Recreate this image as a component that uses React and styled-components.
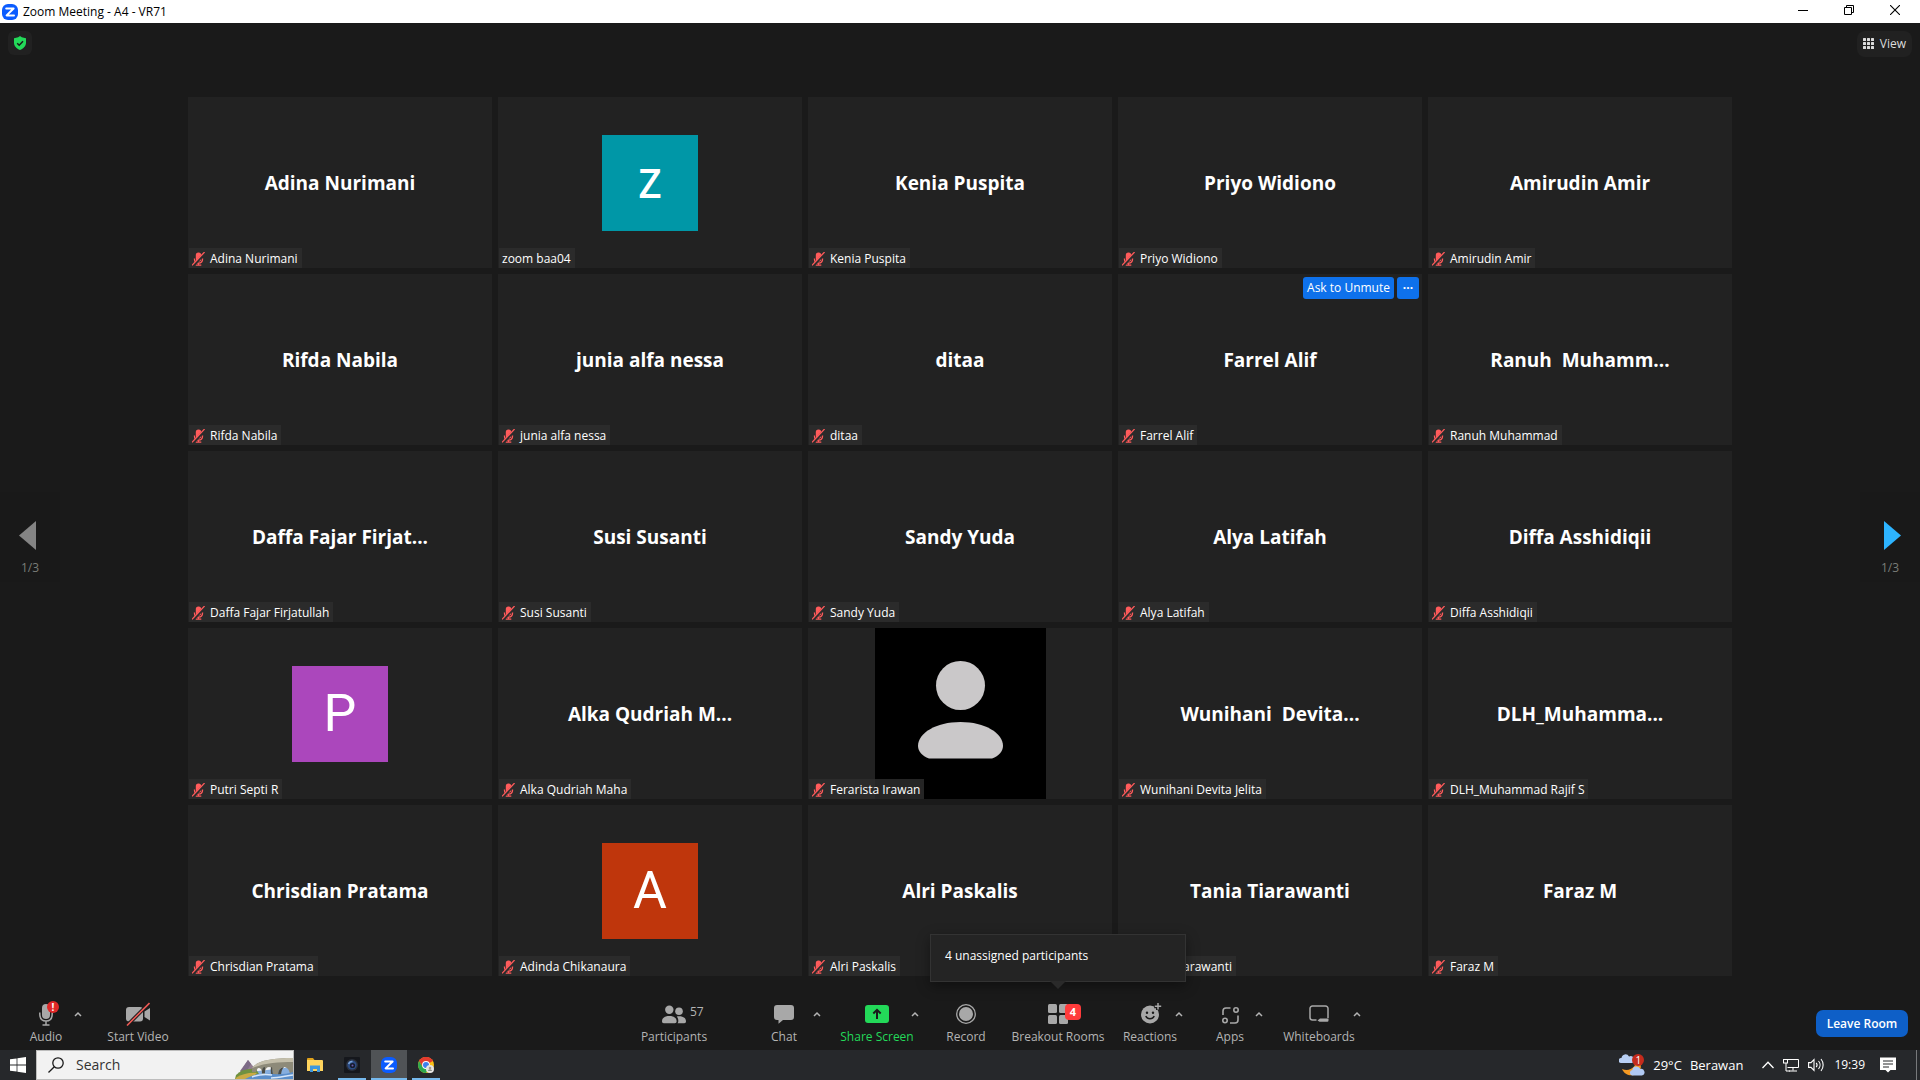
import styled, { createGlobalStyle } from 'styled-components';

const GlobalStyle = createGlobalStyle`
    *, *::before, *::after {
        box-sizing: border-box;
    }

    body {
        margin: 0;
        background: #1a1a1a;
        color: #fff;
        font-family: "Open Sans", "Noto Sans", sans-serif;
        font-size: 12px;
        line-height: 16px;
    }

    button, input {
        margin: 0;
        padding: 0;
        border: 0;
        background: none;
        color: inherit;
        font: inherit;
    }

    button {
        cursor: pointer;
    }

    svg {
        display: block;
        flex: none;
    }
`;

const participants = [
    { name: 'Adina Nurimani' },
    { name: 'zoom baa04', unmuted: true, avatar: { letter: 'Z', color: '#0097a7', size: 40, weight: 600 } },
    { name: 'Kenia Puspita' },
    { name: 'Priyo Widiono' },
    { name: 'Amirudin Amir' },
    { name: 'Rifda Nabila' },
    { name: 'junia alfa nessa' },
    { name: 'ditaa' },
    { name: 'Farrel Alif', hovered: true },
    { name: 'Ranuh Muhammad', title: 'Ranuh  Muhamm...' },
    { name: 'Daffa Fajar Firjatullah', title: 'Daffa Fajar Firjat...' },
    { name: 'Susi Susanti' },
    { name: 'Sandy Yuda' },
    { name: 'Alya Latifah' },
    { name: 'Diffa Asshidiqii' },
    { name: 'Putri Septi R', avatar: { letter: 'P', color: '#ab47bc', size: 52, weight: 400 } },
    { name: 'Alka Qudriah Maha', title: 'Alka Qudriah M...' },
    { name: 'Ferarista Irawan', silhouette: true },
    { name: 'Wunihani Devita Jelita', title: 'Wunihani  Devita...' },
    { name: 'DLH_Muhammad Rajif S', title: 'DLH_Muhamma...' },
    { name: 'Chrisdian Pratama' },
    { name: 'Adinda Chikanaura', avatar: { letter: 'A', color: '#bf360c', size: 52, weight: 400 } },
    { name: 'Alri Paskalis' },
    { name: 'Tania Tiarawanti' },
    { name: 'Faraz M' },
];

/* ---------- icons ---------- */

const ZoomLogo = ({ size }) => (
    <svg width={size} height={size} viewBox="0 0 16 16">
        <rect width="16" height="16" rx="6" fill="#0b5cff" />
        <path d="M4.2 4.5h7.4L4.6 11.4h7.4" fill="none" stroke="#fff" strokeWidth="2" strokeLinejoin="round" strokeLinecap="round" />
    </svg>
);

const MutedMic = () => (
    <svg width="13" height="14" viewBox="0 0 13 14">
        <rect x="3.8" y="0.5" width="5.4" height="9" rx="2.6" fill="#ff5b5b" />
        <path d="M2.4 6.5c0 3 1.600 4.600 4.100 4.600s4.100-1.600 4.100-4.600M6.500 11v2M3.700 13.200h5.600" fill="none" stroke="#ff5b5b" strokeWidth="1.3" />
        <path d="M0.800 14L13 1" stroke="#2b2b2b" strokeWidth="2.600" />
        <path d="M0 13.400L12.600 0" stroke="#ff5b5b" strokeWidth="1.300" />
    </svg>
);

const Silhouette = () => (
    <svg width="100%" height="100%" viewBox="0 0 171 171">
        <circle cx="85.5" cy="57.5" r="24.5" fill="#cac8c9" />
        <path d="M54 130.5C47 128 43 123 43 118C43 105 61 94 85.500 94S128 105 128 118C128 123 124 128 117 130.500Z" fill="#cac8c9" />
    </svg>
);

const AudioIcon = () => (
    <svg width="24" height="24" viewBox="0 0 24 24">
        <rect x="8" y="2" width="8" height="15" rx="4" fill="#a8a8a8" />
        <path d="M5.800 10.500v1.500c0 4.600 2.600 7 6.200 7s6.200-2.400 6.200-7v-1.500M12 19v3.500M8.500 23h7" fill="none" stroke="#a8a8a8" strokeWidth="1.500" />
    </svg>
);

const VideoOffIcon = () => (
    <svg width="24" height="24" viewBox="0 0 24 24">
        <rect x="0" y="5" width="17" height="14.500" rx="3" fill="#a8a8a8" />
        <path d="M18.500 9.500L24 6v12.500l-5.500-3.500z" fill="#a8a8a8" />
        <path d="M1 23.500L23.500 1" stroke="#1a1a1a" strokeWidth="3.600" />
        <path d="M1 23.500L23.500 1" stroke="#ee5a55" strokeWidth="1.600" />
    </svg>
);

const ParticipantsIcon = () => (
    <svg width="24" height="24" viewBox="0 0 24 24" fill="#a8a8a8">
        <circle cx="7.300" cy="7.700" r="4.200" />
        <circle cx="17" cy="9.300" r="3.800" />
        <path d="M0 19.200C0 15.500 3.500 14 7.300 14s7.300 1.500 7.300 5.200c0 1.300-.6 2-1.800 2H1.800c-1.200 0-1.800-.7-1.800-2z" />
        <path d="M14.800 14.600c4.200-.8 9.200.4 9.200 4.600 0 1.300-.6 2-1.700 2h-6.700c.5-.6.700-1.300.7-2.200 0-1.900-.5-3.300-1.500-4.400z" />
    </svg>
);

const ChatIcon = () => (
    <svg width="24" height="24" viewBox="0 0 24 24" fill="#a8a8a8">
        <path d="M5 3h14a3 3 0 0 1 3 3v9a3 3 0 0 1-3 3h-8l-4.500 3.800V18H5a3 3 0 0 1-3-3V6a3 3 0 0 1 3-3z" />
    </svg>
);

const ShareIcon = () => (
    <svg width="24" height="24" viewBox="0 0 24 24">
        <rect y="3" width="24" height="18" rx="3" fill="#23d959" />
        <path d="M12 17V8.500M8.300 11.500L12 7.800l3.700 3.700" fill="none" stroke="#1a1a1a" strokeWidth="2" />
    </svg>
);

const RecordIcon = () => (
    <svg width="24" height="24" viewBox="0 0 24 24">
        <circle cx="12" cy="12" r="9.300" fill="none" stroke="#a8a8a8" strokeWidth="1.300" />
        <circle cx="12" cy="12" r="7" fill="#a8a8a8" />
    </svg>
);

const RoomsIcon = () => (
    <svg width="24" height="24" viewBox="0 0 24 24" fill="#a8a8a8">
        <rect x="2" y="2" width="9" height="9" rx="1.500" />
        <rect x="13" y="2" width="9" height="9" rx="1.500" />
        <rect x="2" y="13" width="9" height="9" rx="1.500" />
        <rect x="13" y="13" width="9" height="9" rx="1.500" />
    </svg>
);

const ReactionsIcon = () => (
    <svg width="24" height="24" viewBox="0 0 24 24">
        <circle cx="12" cy="12.500" r="9" fill="#a8a8a8" />
        <circle cx="9" cy="10.800" r="1.200" fill="#1a1a1a" />
        <circle cx="15" cy="10.800" r="1.200" fill="#1a1a1a" />
        <path d="M7.800 14c.8 1.800 2.300 2.800 4.200 2.800s3.400-1 4.200-2.800" fill="none" stroke="#1a1a1a" strokeWidth="1.500" />
        <path d="M20 0.500v7.500M16.200 4.200H24" stroke="#1a1a1a" strokeWidth="4" />
        <path d="M20 1v6.400M16.800 4.200h6.400" stroke="#a8a8a8" strokeWidth="1.500" />
    </svg>
);

const AppsIcon = () => (
    <svg width="24" height="24" viewBox="0 0 24 24" fill="none" stroke="#a8a8a8" strokeWidth="1.600">
        <path d="M5 13V9a3 3 0 0 1 3-3h4.500M12 21h5a3 3 0 0 0 3-3v-4.500" />
        <circle cx="18" cy="8" r="2.200" />
        <circle cx="7" cy="18.500" r="2.200" />
    </svg>
);

const WhiteboardIcon = () => (
    <svg width="24" height="24" viewBox="0 0 24 24">
        <path d="M9.500 18H5.500a2.500 2.500 0 0 1-2.500-2.500v-9A2.500 2.500 0 0 1 5.500 4h13A2.500 2.500 0 0 1 21 6.500V16" fill="none" stroke="#a8a8a8" strokeWidth="1.500" />
        <path d="M10.500 18.500l2.500-2h8.500v2a1.200 1.200 0 0 1-1.200 1.200h-7.800z" fill="#a8a8a8" />
    </svg>
);

const CaretIcon = () => (
    <svg width="8" height="6" viewBox="0 0 8 6">
        <path d="M1 5l3-3 3 3" fill="none" stroke="#b4b4b4" strokeWidth="1.500" />
    </svg>
);

const ShieldIcon = () => (
    <svg width="14" height="14" viewBox="0 0 14 14">
        <path d="M7 0l1.800 1.200 4.200 1v4.600c0 3.400-2.600 5.800-6 7.200-3.400-1.400-6-3.800-6-7.200V2.200l4.200-1z" fill="#23d959" />
        <path d="M4.200 7.200l2 2 3.800-4" fill="none" stroke="#1a1a1a" strokeWidth="1.500" />
    </svg>
);

const GridIcon = () => (
    <svg width="11" height="11" viewBox="0 0 11 11" fill="#dcdcdc">
        {[0, 4, 8].map(y => [0, 4, 8].map(x => (
            <rect key={`${x}-${y}`} x={x} y={y} width="3" height="3" rx="0.500" />
        )))}
    </svg>
);

const WindowsIcon = () => (
    <svg width="16" height="16" viewBox="0 0 16 16" fill="#fff">
        <path d="M0 2.300l6.600-.9v6.200H0zM7.400 1.300L16 0v7.600H7.400zM0 8.400h6.600v6.200L0 13.700zM7.400 8.400H16V16l-8.600-1.200z" />
    </svg>
);

const MagnifierIcon = () => (
    <svg width="16" height="16" viewBox="0 0 16 16" fill="none" stroke="#1a1a1a" strokeWidth="1.300">
        <circle cx="10" cy="6" r="5.200" />
        <path d="M6.300 9.700L0.500 15.500" />
    </svg>
);

const BridgeArt = () => (
    <svg width="58" height="28" viewBox="0 0 58 28">
        <path d="M5 20L13 9l8 10z" fill="#927c90" />
        <path d="M13 9l3 4-5 8H5z" fill="#7c6a86" />
        <path d="M14 21L58 16v12H0z" fill="#86aede" />
        <path d="M1 24c5-5 12-7 20-6l3 5-22 5H0z" fill="#6f9140" />
        <path d="M2 26c6-3 13-5 20-4l-6 6H0z" fill="#c9ab45" />
        <path d="M17 17c4-5 10-7 16-8 8-1.500 16-2 25-2v21h-3c1-7-2-12-6-12s-6 4-6 9h-5c0-6-1-9-4-9s-4 3-4 7h-3c0-4-1-6-3-6s-2 2-3 4h-4z" fill="#8d8a79" />
        <path d="M17 17c4-5 10-7 16-8 8-1.500 16-2 25-2v4c-14 0-28 1-38 5z" fill="#c3beaa" />
        <path d="M27 22c0-3 .5-6 3-6v6zM36 24c0-4-1-8 1-8l1 8zM43 25c0-6 3-9 6-9-2 2-3 5-3 9z" fill="#4b4d48" />
        <path d="M10 28c8-5 18-6 28-5 8 .5 14 0 20-2v7z" fill="#5a8ecb" />
        <path d="M17 26c8-3 14-3 20-2M36 27c8 0 14-2 22-3" fill="none" stroke="#d5e6fa" strokeWidth="1.500" />
    </svg>
);

const FolderIcon = () => (
    <svg width="16" height="16" viewBox="0 0 16 16">
        <path d="M0 2a1 1 0 0 1 1-1h5l1.500 2H0z" fill="#e0a21b" />
        <path d="M0 3h15a1 1 0 0 1 1 1v10H0z" fill="#ffd45e" />
        <path d="M3 15V8.500h10V15h-3v-3H6v3z" fill="#3f97dd" />
    </svg>
);

const CameraIcon = () => (
    <svg width="16" height="16" viewBox="0 0 16 16">
        <rect width="16" height="16" rx="1" fill="#15171c" />
        <circle cx="8" cy="8" r="6" fill="#2b313d" />
        <circle cx="8" cy="8" r="4.600" fill="#2c4d86" />
        <circle cx="8.500" cy="8.500" r="2.600" fill="#161b2c" />
        <path d="M4.600 7A3.800 3.800 0 0 1 8.500 4.500" fill="none" stroke="#7ba4d8" strokeWidth="1.500" />
        <circle cx="8.500" cy="8.500" r="1" fill="#6b5cae" />
    </svg>
);

const ChromeIcon = () => (
    <svg width="16" height="16" viewBox="0 0 16 16">
        <circle cx="8" cy="8" r="8" fill="#fbc116" />
        <path d="M8 8L1.100 4A8 8 0 0 1 14.900 4z" fill="#e33b2e" />
        <path d="M8 4h6.900A8 8 0 0 0 1.100 4l3.500 6z" fill="#e33b2e" />
        <path d="M1.100 4A8 8 0 0 0 8 16l3.500-6H4.600z" fill="#2da94f" />
        <circle cx="8" cy="8" r="3.900" fill="#fff" />
        <circle cx="8" cy="8" r="3" fill="#3f7fee" />
        <circle cx="12" cy="12" r="4" fill="#e8e6e4" />
        <circle cx="12" cy="11" r="1.300" fill="#a98" />
        <path d="M9.800 14a2.300 2.300 0 0 1 4.400 0z" fill="#8a8f86" />
    </svg>
);

const WeatherIcon = () => (
    <svg width="26" height="24" viewBox="0 0 26 24">
        <path d="M3 16c8 3 15-2 14-10 5 3 7 9 2 14-5 4-13 3-16-4z" fill="#f59a23" />
        <path d="M2 10a2.500 2.500 0 0 1 .5-5A4 4 0 0 1 10 3.500 3.300 3.300 0 0 1 13 10z" fill="#b9d0f5" />
        <path d="M13 22.500a2.800 2.800 0 0 1 .3-5.500 4.200 4.200 0 0 1 8-1 3.300 3.300 0 0 1 1.700 6.500z" fill="#b0c9f3" />
        <circle cx="19" cy="7" r="6" fill="#c42b1c" />
    </svg>
);

const TrayCaretIcon = () => (
    <svg width="12" height="8" viewBox="0 0 12 8">
        <path d="M0.500 7L6 1.200 11.500 7" fill="none" stroke="#fff" strokeWidth="1.300" />
    </svg>
);

const NetworkIcon = () => (
    <svg width="16" height="14" viewBox="0 0 16 14" fill="none" stroke="#fff">
        <path d="M5 1.500h10.500v8H4.500M10 9.500v3M6 13h8M3 5v8h4" />
        <rect x="0.500" y="1.500" width="4" height="3.500" />
    </svg>
);

const VolumeIcon = () => (
    <svg width="17" height="14" viewBox="0 0 17 14" fill="none" stroke="#fff" strokeWidth="1.100">
        <path d="M0.600 4.600h2.400L6 1.500v11L3 9.400H.6z" />
        <path d="M8.200 4.800a3.500 3.500 0 0 1 0 4.400M10.500 3a6 6 0 0 1 0 8M13 1a9.500 9.500 0 0 1 0 12" />
    </svg>
);

const NotificationIcon = () => (
    <svg width="16" height="16" viewBox="0 0 16 16">
        <path d="M0 0.500h16v12.500h-5.500L8 15.500 5.500 13H0z" fill="#fff" />
        <path d="M3 4h10M3 7h10M3 10h6" stroke="#26282b" strokeWidth="1.200" />
    </svg>
);

/* ---------- window ---------- */

const Window = styled.div`
    display: flex;
    flex-direction: column;
    min-height: 100vh;
`;

const TitleBar = styled.header`
    display: flex;
    align-items: center;
    height: 23px;
    padding: 0 2px;
    background: #fff;
    color: #000;
`;

const WindowTitle = styled.h1`
    flex: 1;
    margin: 0 0 0 5px;
    font-size: 12px;
    font-weight: 400;
`;

const WindowButton = styled.button`
    display: flex;
    align-items: center;
    justify-content: center;
    width: 46px;
    height: 20px;
    align-self: flex-start;
`;

const MeetingHeader = styled.div`
    display: flex;
    justify-content: space-between;
    align-items: flex-start;
    height: 74px;
    padding: 8px;
`;

const ShieldButton = styled.button`
    display: flex;
    align-items: center;
    justify-content: center;
    width: 24px;
    height: 24px;
    border-radius: 6px;
    background: #212121;
`;

const ViewButton = styled.button`
    display: flex;
    align-items: center;
    gap: 6px;
    height: 26px;
    padding: 0 6px 1px;
    border-radius: 8px;
    background: #212121;
    color: #dcdcdc;
`;

/* ---------- gallery ---------- */

const Stage = styled.main`
    display: flex;
    align-items: center;
    flex: 1;
`;

const PagerSide = styled.div`
    display: flex;
    flex: 0 0 188px;
    justify-content: ${({ $side }) => ($side === 'left' ? 'flex-start' : 'flex-end')};
`;

const PagerButton = styled.button`
    display: flex;
    flex-direction: column;
    align-items: center;
    justify-content: flex-end;
    gap: 10px;
    width: 60px;
    height: 90px;
    padding-bottom: 6px;
    background: #191919;
    color: #7a7d78;
`;

const Gallery = styled.ul`
    display: grid;
    grid-template-columns: repeat(5, 1fr);
    gap: 6px;
    flex: 1;
    margin: 0;
    padding: 0;
    list-style: none;
`;

const TileBox = styled.li`
    display: grid;
    grid-template: 100% / 100%;
    aspect-ratio: 16 / 9;
    min-width: 0;
    background: #222;

    > * {
        grid-area: 1 / 1;
        place-self: center;
    }
`;

const BigName = styled.span`
    font-size: 19px;
    line-height: 28px;
    font-weight: 700;
    white-space: pre;
`;

const Avatar = styled.div`
    display: flex;
    align-items: center;
    justify-content: center;
    width: 96px;
    height: 96px;
    background: ${({ $color }) => $color};
    font-family: ${({ $weight }) => ($weight === 400 ? 'Roboto' : '"Open Sans"')}, sans-serif;
    font-size: ${({ $size }) => $size}px;
    font-weight: ${({ $weight }) => $weight};
    line-height: 1;
`;

const Picture = styled.div`
    height: 100%;
    aspect-ratio: 1;
    background: #000;
`;

const NameTag = styled.div`
    display: flex;
    align-items: center;
    gap: 5px;
    height: 20px;
    margin-left: 1px;
    padding: 1px 4px 0 3px;
    background: rgba(46, 46, 46, 0.8);
    line-height: 19px;
    white-space: nowrap;
    place-self: end start;
`;

const TileActions = styled.div`
    display: flex;
    gap: 3px;
    padding: 3px;
    place-self: start end;
`;

const TileButton = styled.button`
    min-width: 22px;
    height: 22px;
    padding: 0 4px;
    border-radius: 3px;
    background: #0e71eb;
    font-weight: ${({ $bold }) => ($bold ? 700 : 400)};
    line-height: 22px;
`;

/* ---------- meeting toolbar ---------- */

const Toolbar = styled.footer`
    display: flex;
    justify-content: space-between;
    height: 74px;
    padding: 26px 12px 0 22px;
    color: #b4b4b4;
`;

const ToolGroup = styled.div`
    display: flex;
    gap: 22px;
`;

const Tool = styled.div`
    position: relative;
    display: flex;
    align-items: flex-start;
`;

const ToolButton = styled.button`
    display: flex;
    flex-direction: column;
    align-items: center;
    gap: 3px;
    width: ${({ $width }) => $width}px;
    color: ${({ $accent }) => ($accent ? '#23d959' : 'inherit')};
    white-space: nowrap;
`;

const IconSlot = styled.span`
    position: relative;
    display: block;
`;

const CaretButton = styled.button`
    display: flex;
    align-items: center;
    justify-content: center;
    width: 16px;
    height: 24px;
`;

const Count = styled.span`
    position: absolute;
    top: 2px;
    left: 28px;
`;

const Alert = styled.span`
    position: absolute;
    top: -1px;
    left: 13px;
    width: 12px;
    height: 12px;
    border-radius: 6px;
    background: #e02828;
    color: #fff;
    font-size: 10px;
    font-weight: 700;
    line-height: 12px;
    text-align: center;
`;

const Badge = styled.span`
    position: absolute;
    top: 2px;
    left: 19px;
    width: 16px;
    height: 16px;
    border-radius: 4px;
    background: #ff3b3b;
    color: #fff;
    font-size: 11px;
    font-weight: 700;
    line-height: 16px;
    text-align: center;
`;

const Tooltip = styled.div`
    position: absolute;
    bottom: calc(100% + 20px);
    left: 50%;
    width: 256px;
    height: 48px;
    margin-left: -128px;
    padding: 13px 14px;
    border: 1px solid #333;
    background: #242424;
    box-shadow: 0 4px 12px rgba(0, 0, 0, 0.4);
    color: #fff;

    &::after {
        content: '';
        position: absolute;
        top: 100%;
        left: 50%;
        margin-left: -8px;
        border: 8px solid transparent;
        border-top-color: #2a2a2a;
        border-bottom: 0;
    }
`;

const LeaveButton = styled.button`
    width: 92px;
    height: 27px;
    margin: 8px 0 0 8px;
    border-radius: 7px;
    background: #0e5fc7;
    color: #fff;
    font-weight: 600;
    line-height: 24px;
`;

/* ---------- taskbar ---------- */

const Taskbar = styled.nav`
    display: flex;
    justify-content: space-between;
    height: 30px;
    background: #26282b;
`;

const TaskGroup = styled.div`
    display: flex;
    align-items: center;
`;

const StartButton = styled.button`
    display: flex;
    align-items: center;
    justify-content: center;
    width: 36px;
    height: 30px;
`;

const SearchBox = styled.label`
    display: flex;
    align-items: center;
    gap: 12px;
    width: 258px;
    height: 30px;
    padding-left: 11px;
    border: 1px solid #bdbdbd;
    background: #f2f2f2;
    overflow: hidden;

    input {
        flex: 1;
        min-width: 0;
        outline: none;
        color: #333;
        font-size: 14px;
        line-height: 20px;
    }

    input::placeholder {
        color: #333;
        opacity: 1;
    }

    svg:last-child {
        align-self: flex-end;
    }
`;

const Apps = styled.div`
    display: flex;
    gap: 5px;
    margin-left: 3px;
`;

const AppButton = styled.button`
    display: flex;
    align-items: center;
    justify-content: center;
    width: ${({ $wide }) => ($wide ? 36 : 28)}px;
    height: 30px;
    border-bottom: ${({ $open }) => ($open ? '2px solid #76b9ed' : '0')};
    padding-top: ${({ $open }) => ($open ? 2 : 0)}px;
    background: ${({ $active }) => ($active ? '#505356' : 'none')};
`;

const Tray = styled(TaskGroup)`
    gap: 9px;
    border-right: 1px solid #77797b;
    margin-right: 3px;
    padding-right: 20px;
`;

const WeatherButton = styled.button`
    display: flex;
    align-items: center;
    gap: 8px;
    height: 30px;
    margin-right: 10px;
    font-size: 13px;
`;

const WeatherBadge = styled.span`
    position: relative;

    span {
        position: absolute;
        top: 1px;
        left: 13px;
        width: 12px;
        font-size: 10px;
        line-height: 12px;
        text-align: center;
    }
`;

const TrayButton = styled.button`
    display: flex;
    align-items: center;
    height: 30px;
`;

const Clock = styled.time`
    margin-right: 6px;
`;

const Tile = ({ name, title, unmuted, avatar, silhouette, hovered }) => (
    <TileBox>
        {avatar && (
            <Avatar $color={avatar.color} $size={avatar.size} $weight={avatar.weight}>
                {avatar.letter}
            </Avatar>
        )}
        {silhouette && <Picture><Silhouette /></Picture>}
        {!avatar && !silhouette && <BigName>{title || name}</BigName>}
        {hovered && (
            <TileActions>
                <TileButton>Ask to Unmute</TileButton>
                <TileButton $bold aria-label="More options">···</TileButton>
            </TileActions>
        )}
        <NameTag>
            {!unmuted && <MutedMic />}
            {name}
        </NameTag>
    </TileBox>
);

const ToolItem = ({ label, icon, width, caret, accent, extra, tooltip }) => (
    <Tool>
        <ToolButton $width={width} $accent={accent}>
            <IconSlot>
                {icon}
                {extra}
            </IconSlot>
            {label}
        </ToolButton>
        {caret && (
            <CaretButton aria-label={`${label} options`}>
                <CaretIcon />
            </CaretButton>
        )}
        {tooltip && <Tooltip role="tooltip">{tooltip}</Tooltip>}
    </Tool>
);

const App = () => (
    <>
        <GlobalStyle />
        <Window>
            <TitleBar>
                <ZoomLogo size={16} />
                <WindowTitle>Zoom Meeting - A4 - VR71</WindowTitle>
                <WindowButton aria-label="Minimize">
                    <svg width="10" height="10"><path d="M0 5.500h10" stroke="#000" /></svg>
                </WindowButton>
                <WindowButton aria-label="Restore">
                    <svg width="10" height="10" fill="none" stroke="#000">
                        <path d="M0.500 2.500h7v7h-7zM2.500 2.500v-2h7v7h-2" />
                    </svg>
                </WindowButton>
                <WindowButton aria-label="Close">
                    <svg width="10" height="10"><path d="M0 0l10 10M10 0L0 10" stroke="#000" strokeWidth="1.100" /></svg>
                </WindowButton>
            </TitleBar>

            <MeetingHeader>
                <ShieldButton aria-label="Meeting information"><ShieldIcon /></ShieldButton>
                <ViewButton><GridIcon />View</ViewButton>
            </MeetingHeader>

            <Stage>
                <PagerSide $side="left">
                    <PagerButton aria-label="Previous page">
                        <svg width="22" height="29" viewBox="0 0 22 29"><path d="M17 0v29L0 14.500z" fill="#848484" /></svg>
                        1/3
                    </PagerButton>
                </PagerSide>
                <Gallery>
                    {participants.map(person => <Tile key={person.name} {...person} />)}
                </Gallery>
                <PagerSide $side="right">
                    <PagerButton aria-label="Next page">
                        <svg width="22" height="29" viewBox="0 0 22 29"><path d="M5 0v29l17-14.500z" fill="#2db4ff" /></svg>
                        1/3
                    </PagerButton>
                </PagerSide>
            </Stage>

            <Toolbar>
                <ToolGroup>
                    <ToolItem label="Audio" icon={<AudioIcon />} width={48} caret extra={<Alert>!</Alert>} />
                    <ToolItem label="Start Video" icon={<VideoOffIcon />} width={60} />
                </ToolGroup>
                <ToolGroup>
                    <ToolItem label="Participants" icon={<ParticipantsIcon />} width={126} extra={<Count>57</Count>} />
                    <ToolItem label="Chat" icon={<ChatIcon />} width={50} caret />
                    <ToolItem label="Share Screen" icon={<ShareIcon />} width={60} caret accent />
                    <ToolItem label="Record" icon={<RecordIcon />} width={42} />
                    <ToolItem
                        label="Breakout Rooms"
                        icon={<RoomsIcon />}
                        width={98}
                        extra={<Badge>4</Badge>}
                        tooltip="4 unassigned participants"
                    />
                    <ToolItem label="Reactions" icon={<ReactionsIcon />} width={42} caret />
                    <ToolItem label="Apps" icon={<AppsIcon />} width={42} caret />
                    <ToolItem label="Whiteboards" icon={<WhiteboardIcon />} width={60} caret />
                </ToolGroup>
                <LeaveButton>Leave Room</LeaveButton>
            </Toolbar>

            <Taskbar>
                <TaskGroup>
                    <StartButton aria-label="Start"><WindowsIcon /></StartButton>
                    <SearchBox>
                        <MagnifierIcon />
                        <input type="text" placeholder="Search" aria-label="Search" />
                        <BridgeArt />
                    </SearchBox>
                    <Apps>
                        <AppButton $wide aria-label="File Explorer"><FolderIcon /></AppButton>
                        <AppButton $open aria-label="Camera"><CameraIcon /></AppButton>
                        <AppButton $open $wide $active aria-label="Zoom"><ZoomLogo size={16} /></AppButton>
                        <AppButton $open aria-label="Chrome"><ChromeIcon /></AppButton>
                    </Apps>
                </TaskGroup>
                <Tray>
                    <WeatherButton>
                        <WeatherBadge><WeatherIcon /><span>1</span></WeatherBadge>
                        <span>29°C</span>
                        <span>Berawan</span>
                    </WeatherButton>
                    <TrayButton aria-label="Show hidden icons"><TrayCaretIcon /></TrayButton>
                    <TrayButton aria-label="Network"><NetworkIcon /></TrayButton>
                    <TrayButton aria-label="Volume"><VolumeIcon /></TrayButton>
                    <Clock>19:39</Clock>
                    <TrayButton aria-label="Notifications"><NotificationIcon /></TrayButton>
                </Tray>
            </Taskbar>
        </Window>
    </>
);

export default App;
